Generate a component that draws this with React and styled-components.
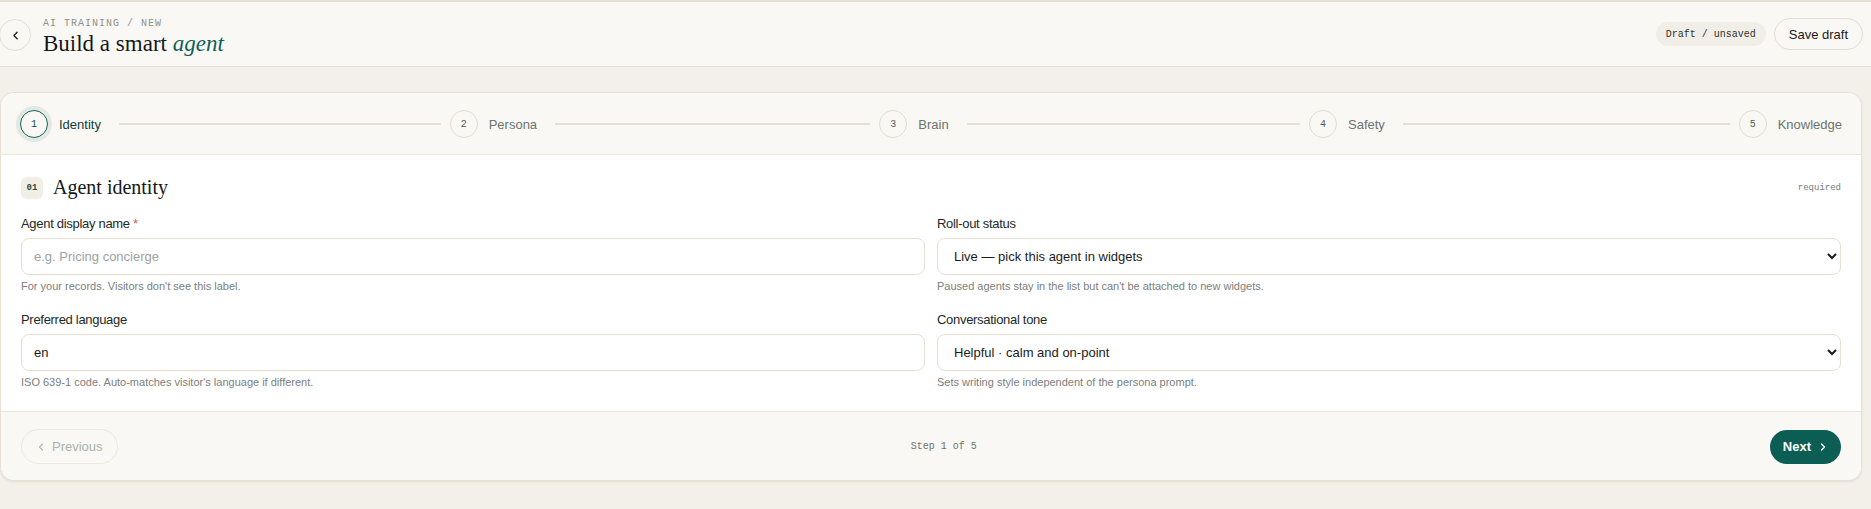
import React from 'react'
import styled, { createGlobalStyle } from 'styled-components'
import { ChevronLeft, ChevronRight } from 'lucide-react'

const GlobalStyle = createGlobalStyle`
  * { box-sizing: border-box; }
  html, body {
    margin: 0;
    padding: 0;
    background: #f3f0e9;
  }
  body {
    font-family: 'Liberation Sans', Arial, sans-serif;
    color: #1b1f1d;
  }
`

const steps = ['Identity', 'Persona', 'Brain', 'Safety', 'Knowledge']

export default function App() {
  return (
    <>
      <GlobalStyle />
      <TopBar>
        <TitleGroup>
          <BackButton aria-label="Back">
            <ChevronLeft size={13} strokeWidth={2.6} />
          </BackButton>
          <TitleBlock>
            <Breadcrumb>AI TRAINING / NEW</Breadcrumb>
            <PageTitle>
              Build a smart <em>agent</em>
            </PageTitle>
          </TitleBlock>
        </TitleGroup>
        <Actions>
          <DraftPill>Draft / unsaved</DraftPill>
          <GhostButton>Save draft</GhostButton>
        </Actions>
      </TopBar>

      <Main>
        <Card>
          <Stepper>
            {steps.map((s, i) => (
              <Step key={s} last={i === steps.length - 1}>
                <StepCircle active={i === 0}>{i + 1}</StepCircle>
                <StepLabel active={i === 0}>{s}</StepLabel>
                {i < steps.length - 1 && <StepLine />}
              </Step>
            ))}
          </Stepper>

          <Section>
            <SectionHead>
              <SectionTitle>
                <Badge>01</Badge>
                <h2>Agent identity</h2>
              </SectionTitle>
              <Meta>required</Meta>
            </SectionHead>

            <FieldGrid>
              <Field>
                <Label>
                  Agent display name <Req>*</Req>
                </Label>
                <Input placeholder="e.g. Pricing concierge" />
                <Help>For your records. Visitors don't see this label.</Help>
              </Field>
              <Field>
                <Label>Roll-out status</Label>
                <Select defaultValue="live">
                  <option value="live">Live — pick this agent in widgets</option>
                  <option value="paused">Paused</option>
                </Select>
                <Help>Paused agents stay in the list but can't be attached to new widgets.</Help>
              </Field>
              <Field>
                <Label>Preferred language</Label>
                <Input defaultValue="en" />
                <Help>ISO 639-1 code. Auto-matches visitor's language if different.</Help>
              </Field>
              <Field>
                <Label>Conversational tone</Label>
                <Select defaultValue="helpful">
                  <option value="helpful">Helpful · calm and on-point</option>
                  <option value="friendly">Friendly</option>
                </Select>
                <Help>Sets writing style independent of the persona prompt.</Help>
              </Field>
            </FieldGrid>
          </Section>

          <Footer>
            <PrevButton disabled>
              <ChevronLeft size={12} strokeWidth={2.2} />
              Previous
            </PrevButton>
            <StepCount>Step 1 of 5</StepCount>
            <NextButton>
              Next
              <ChevronRight size={12} strokeWidth={2.6} />
            </NextButton>
          </Footer>
        </Card>
      </Main>
    </>
  )
}

const TopBar = styled.header`
  display: flex;
  align-items: center;
  justify-content: space-between;
  height: 67px;
  padding: 0 8px 0 0;
  background: #faf8f4;
  border-top: 2px solid #e7e1d5;
  border-bottom: 1px solid #e7e1d5;
`

const TitleGroup = styled.div`
  display: flex;
  align-items: center;
  gap: 12px;
  margin-left: -1px;
`

const BackButton = styled.button`
  width: 32px;
  height: 32px;
  border-radius: 50%;
  border: 1px solid #e4ddd0;
  background: #faf8f4;
  color: #1d2421;
  display: flex;
  align-items: center;
  justify-content: center;
  padding: 0;
  margin-top: 2px;
`

const TitleBlock = styled.div`
  display: flex;
  flex-direction: column;
  padding-top: 6px;
`

const Breadcrumb = styled.div`
  font-family: 'Liberation Mono', monospace;
  font-size: 10px;
  line-height: 12px;
  letter-spacing: 1px;
  color: #8d928e;
`

const PageTitle = styled.h1`
  margin: 1px 0 0;
  font-family: 'Liberation Serif', serif;
  font-weight: 400;
  font-size: 23px;
  line-height: 26px;
  color: #14181a;

  em {
    color: #0c5e57;
  }
`

const Actions = styled.div`
  display: flex;
  align-items: center;
  gap: 8px;
`

const DraftPill = styled.span`
  height: 24px;
  padding: 0 10px;
  border-radius: 12px;
  background: #f1eee7;
  display: inline-flex;
  align-items: center;
  font-family: 'Liberation Mono', monospace;
  font-size: 10px;
  color: #2f3331;
`

const GhostButton = styled.button`
  height: 32px;
  padding: 0 14px;
  border-radius: 16px;
  border: 1px solid #e3dccf;
  background: #faf8f4;
  font-family: 'Liberation Sans', Arial, sans-serif;
  font-size: 13px;
  color: #1a1a1a;
`

const Main = styled.main`
  padding: 25px 9px 31px 0;
`

const Card = styled.div`
  background: #fff;
  border: 1px solid #e6dfd2;
  border-radius: 14px;
  overflow: hidden;
  box-shadow: 0 1px 2px rgba(70, 55, 30, 0.1);
`

const Stepper = styled.div`
  display: flex;
  align-items: center;
  padding: 17px 19px 16px;
  background: #faf8f4;
  border-bottom: 1px solid #ebe5d9;
`

const Step = styled.div`
  flex: ${p => (p.last ? 'none' : '1')};
  display: flex;
  align-items: center;
  gap: 11px;
`

const StepCircle = styled.span`
  width: 28px;
  height: 28px;
  flex: none;
  border-radius: 50%;
  display: flex;
  align-items: center;
  justify-content: center;
  font-family: 'Liberation Mono', monospace;
  font-size: 10px;
  color: ${p => (p.active ? '#0c4f48' : '#555a57')};
  border: ${p => (p.active ? '1.5px solid #0d5f55' : '1px solid #e3dccf')};
  box-shadow: ${p => (p.active ? '0 0 0 4px #e2e9e4' : 'none')};
`

const StepLabel = styled.span`
  font-size: 13px;
  color: ${p => (p.active ? '#0f3f3a' : '#6b7470')};
  white-space: nowrap;
`

const StepLine = styled.span`
  flex: 1;
  height: 2px;
  margin: 0 9px 0 7px;
  background: #e6dfd0;
`

const Section = styled.section`
  padding: 21px 20px 22px;
`

const SectionHead = styled.div`
  display: flex;
  align-items: center;
  justify-content: space-between;
  margin-bottom: 17px;
`

const SectionTitle = styled.div`
  display: flex;
  align-items: center;
  gap: 10px;

  h2 {
    margin: 0;
    font-family: 'Liberation Serif', serif;
    font-weight: 400;
    font-size: 20px;
    color: #14181a;
  }
`

const Badge = styled.span`
  width: 22px;
  height: 22px;
  border-radius: 6px;
  background: #f1eee6;
  display: flex;
  align-items: center;
  justify-content: center;
  font-family: 'Liberation Mono', monospace;
  font-size: 9px;
  font-weight: 700;
  color: #2b4a44;
`

const Meta = styled.span`
  font-family: 'Liberation Mono', monospace;
  font-size: 9px;
  color: #777b78;
`

const FieldGrid = styled.div`
  display: grid;
  grid-template-columns: 1fr 1fr;
  column-gap: 12px;
  row-gap: 19px;
`

const Field = styled.div`
  display: flex;
  flex-direction: column;
`

const Label = styled.label`
  font-size: 13px;
  line-height: 16px;
  letter-spacing: -0.3px;
  color: #1d2a26;
  margin-bottom: 6px;
`

const Req = styled.span`
  color: #c9683e;
`

const Input = styled.input`
  height: 37px;
  padding: 0 12px;
  border: 1px solid #e6dfd2;
  border-radius: 8px;
  background: #fff;
  font-family: 'Liberation Sans', Arial, sans-serif;
  font-size: 13px;
  color: #1b1b1b;
  outline: none;

  &::placeholder {
    color: #9ea19e;
  }
`

const Select = styled.select`
  height: 37px;
  padding: 0 8px 0 12px;
  border: 1px solid #e6dfd2;
  border-radius: 8px;
  background: #fff;
  font-family: 'Liberation Sans', Arial, sans-serif;
  font-size: 13px;
  color: #1b1b1b;
  outline: none;
`

const Help = styled.div`
  margin-top: 4px;
  font-size: 11px;
  line-height: 14px;
  color: #7c807d;
`

const Footer = styled.div`
  display: flex;
  align-items: center;
  justify-content: space-between;
  padding: 17px 20px 16px;
  background: #faf8f4;
  border-top: 1px solid #ebe5d9;
`

const PrevButton = styled.button`
  height: 35px;
  padding: 0 14px 0 13px;
  display: flex;
  align-items: center;
  gap: 5px;
  border-radius: 18px;
  border: 1px solid #ece8e0;
  background: transparent;
  font-family: 'Liberation Sans', Arial, sans-serif;
  font-size: 13px;
  color: #a9b2ad;
`

const StepCount = styled.span`
  font-family: 'Liberation Mono', monospace;
  font-size: 10px;
  color: #6d706e;
`

const NextButton = styled.button`
  height: 34px;
  padding: 0 12px 0 13px;
  display: flex;
  align-items: center;
  gap: 6px;
  border: none;
  border-radius: 17px;
  background: #0c5e54;
  font-family: 'Liberation Sans', Arial, sans-serif;
  font-size: 13px;
  font-weight: 700;
  color: #fff;
`
